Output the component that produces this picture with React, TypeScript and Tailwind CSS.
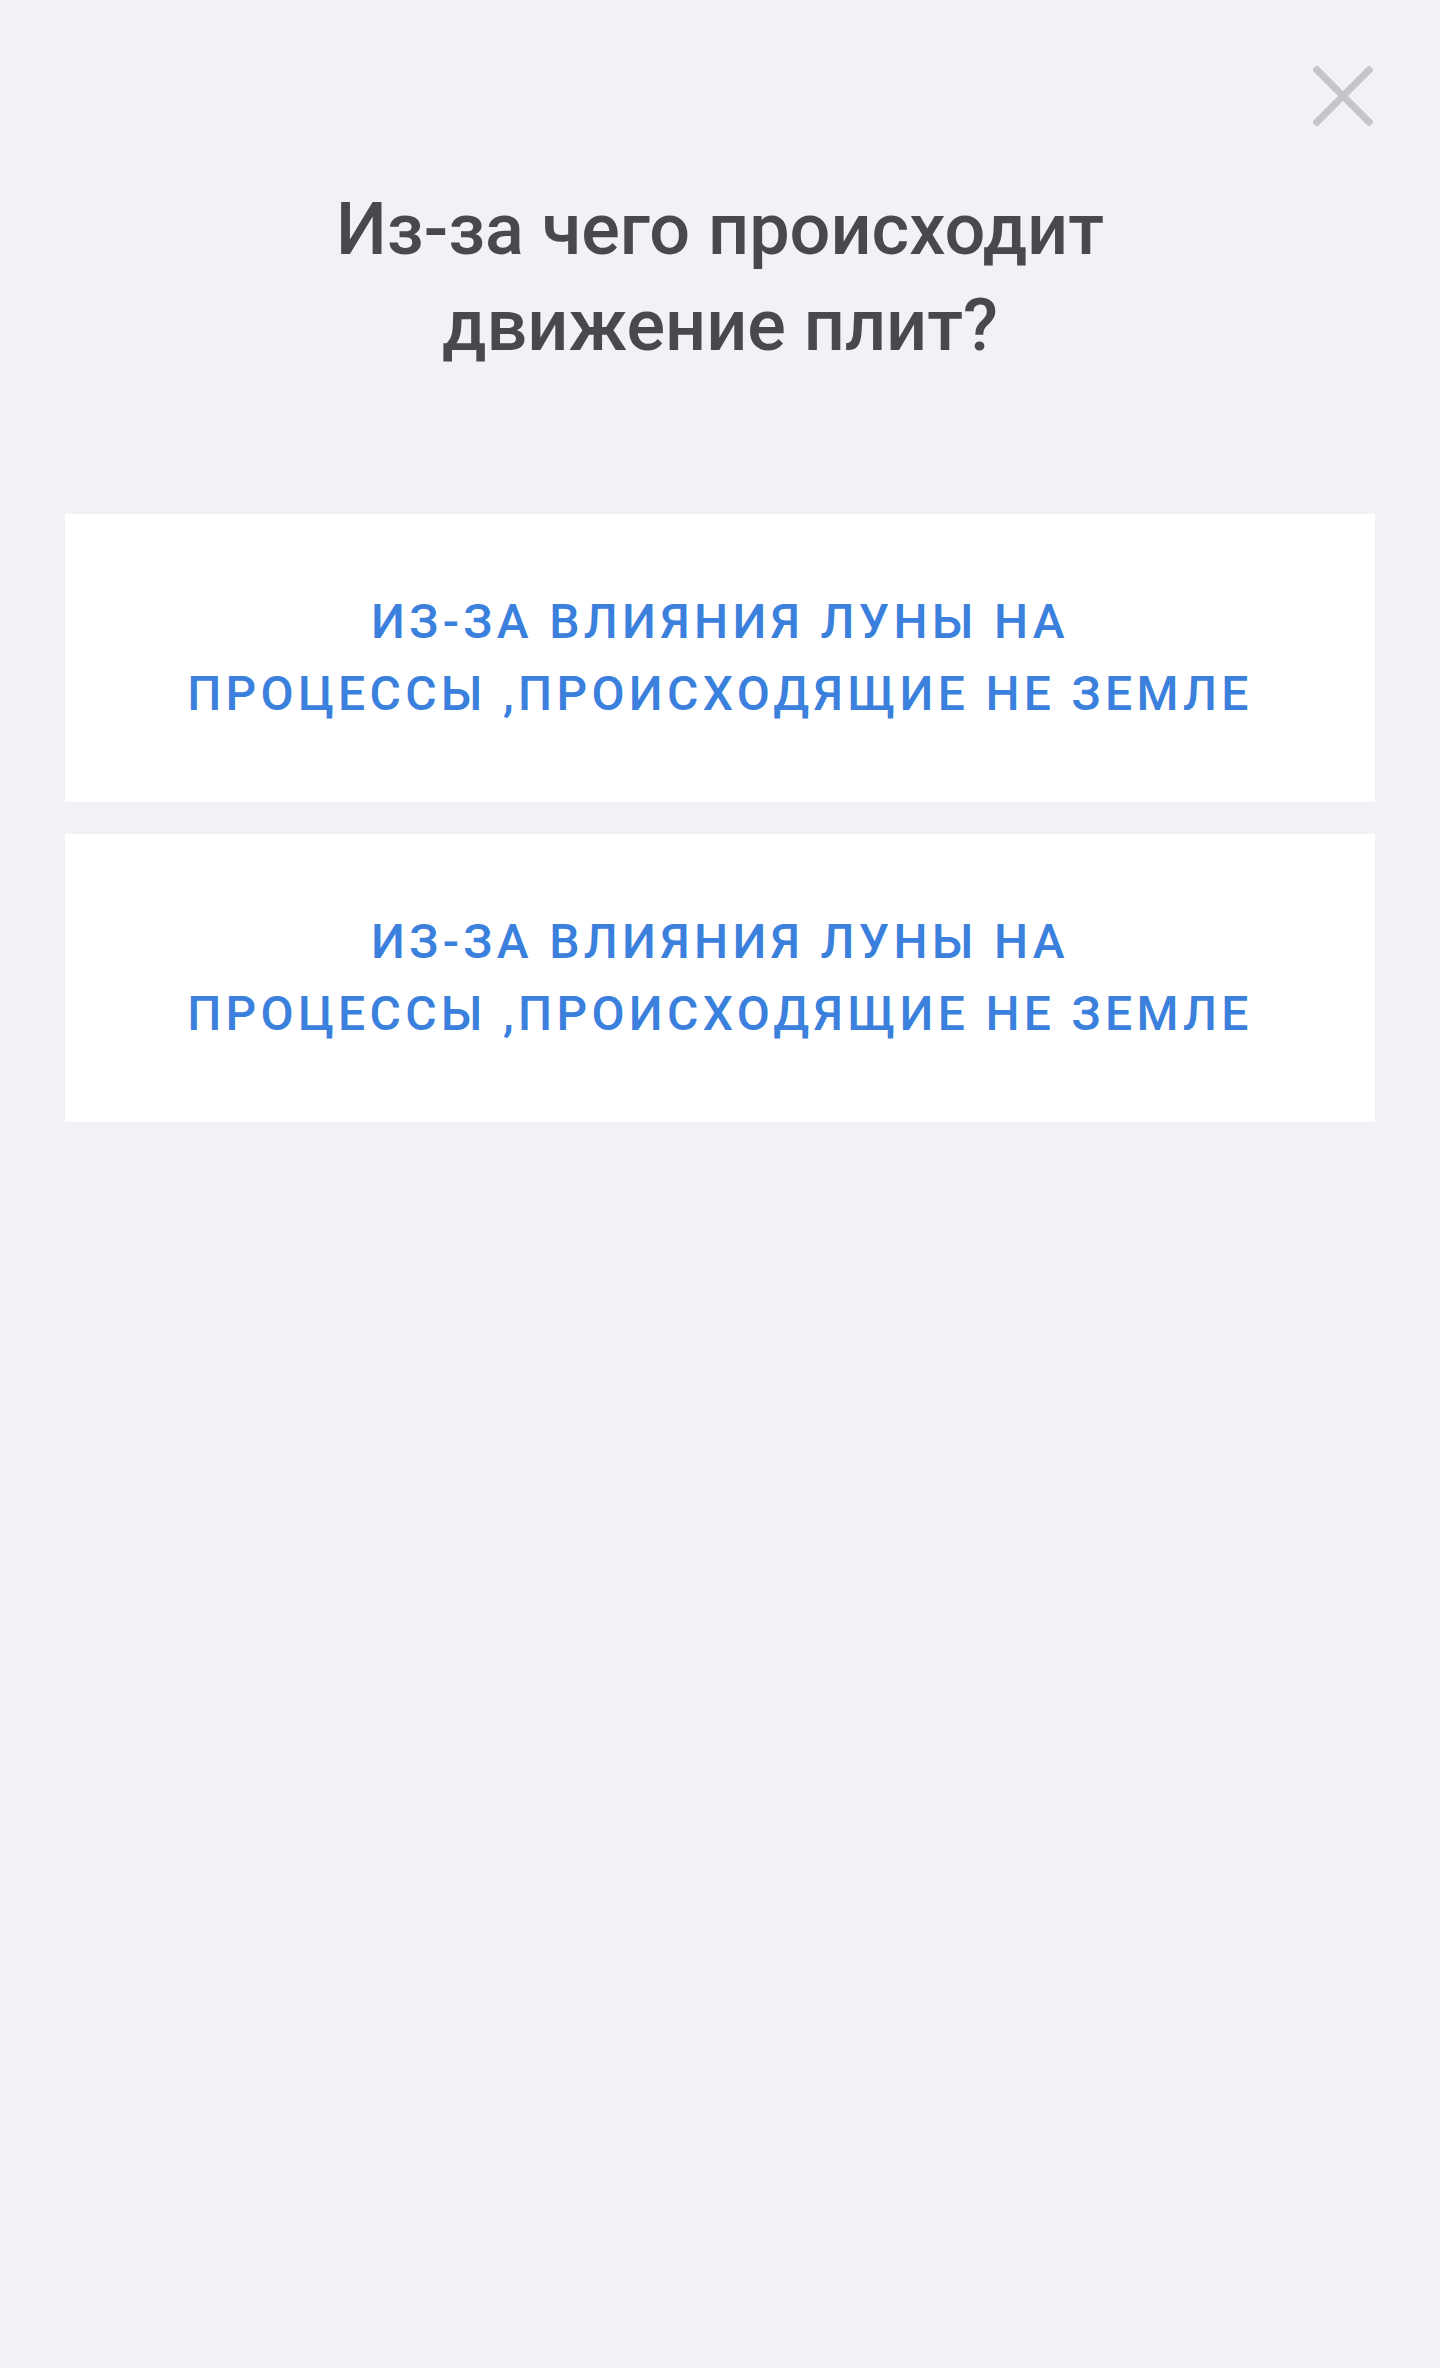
import React from 'react';

// Вопрос викторины с вариантами ответа
const answers = [
  ['Из-за влияния Луны на', 'процессы ,происходящие не Земле'],
  ['Из-за влияния Луны на', 'процессы ,происходящие не Земле'],
];

const CloseIcon: React.FC = () => (
  <svg width="60" height="60" viewBox="0 0 60 60" fill="none">
    <path d="M4 4 L56 56 M56 4 L4 56" stroke="#c6c6c8" strokeWidth="7" strokeLinecap="square" />
  </svg>
);

const App: React.FC = () => {
  return (
    <div className="min-h-screen w-full bg-[#f1f2f6] font-['Roboto','Noto_Sans',sans-serif]">
      {/* Кнопка закрытия */}
      <div className="flex justify-end pt-[66px] pr-[67px]">
        <button className="w-[60px] h-[60px] flex items-center justify-center">
          <CloseIcon />
        </button>
      </div>

      <h1 className="mt-[56px] text-center text-[72px] leading-[96px] font-medium text-[#48484d] px-[300px]">
        Из-за чего происходит
        <br />
        движение плит?
      </h1>

      <div className="mt-[140px] px-[65px] flex flex-col gap-[32px]">
        {answers.map((lines, idx) => (
          <button
            key={idx}
            className="w-full h-[288px] bg-white flex flex-col items-center justify-center px-[60px]"
          >
            {lines.map((line, i) => (
              <span
                key={i}
                className="block whitespace-nowrap text-center uppercase text-[48px] leading-[72px] font-medium tracking-[0.09em] text-[#3a80dc]"
              >
                {line}
              </span>
            ))}
          </button>
        ))}
      </div>
    </div>
  );
};

export default App;
